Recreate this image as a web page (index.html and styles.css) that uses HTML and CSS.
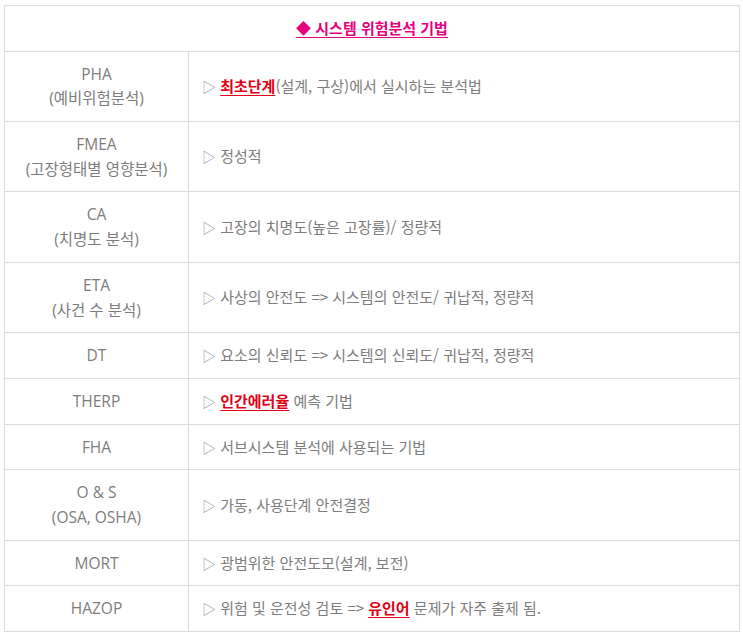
FILE: index.html
```html
<!DOCTYPE html>
<html lang="ko">
<head>
<meta charset="utf-8">
<title>시스템 위험분석 기법</title>
<link rel="stylesheet" href="styles.css">
</head>
<body>
<table class="grid">
  <colgroup><col class="c-name"><col class="c-desc"></colgroup>
  <tr><th colspan="2" class="title"><div class="ln"><span class="title-text">◆ 시스템 위험분석 기법</span></div></th></tr>
  <tr><td class="name"><div class="ln">PHA</div><div class="ln">(예비위험분석)</div></td><td class="desc"><div class="ln"><span class="tri">▷</span> <span class="hl">최초단계</span>(설계, 구상)에서 실시하는 분석법</div></td></tr>
  <tr><td class="name"><div class="ln">FMEA</div><div class="ln">(고장형태별 영향분석)</div></td><td class="desc"><div class="ln"><span class="tri">▷</span> 정성적</div></td></tr>
  <tr><td class="name"><div class="ln">CA</div><div class="ln">(치명도 분석)</div></td><td class="desc"><div class="ln"><span class="tri">▷</span> 고장의 치명도(높은 고장률)/ 정량적</div></td></tr>
  <tr><td class="name"><div class="ln">ETA</div><div class="ln">(사건 수 분석)</div></td><td class="desc"><div class="ln"><span class="tri">▷</span> 사상의 안전도 =&gt; 시스템의 안전도/ 귀납적, 정량적</div></td></tr>
  <tr><td class="name"><div class="ln">DT</div></td><td class="desc"><div class="ln"><span class="tri">▷</span> 요소의 신뢰도 =&gt; 시스템의 신뢰도/ 귀납적, 정량적</div></td></tr>
  <tr><td class="name"><div class="ln">THERP</div></td><td class="desc"><div class="ln"><span class="tri">▷</span> <span class="hl">인간에러율</span> 예측 기법</div></td></tr>
  <tr><td class="name"><div class="ln">FHA</div></td><td class="desc"><div class="ln"><span class="tri">▷</span> 서브시스템 분석에 사용되는 기법</div></td></tr>
  <tr><td class="name"><div class="ln">O &amp; S</div><div class="ln">(OSA, OSHA)</div></td><td class="desc"><div class="ln"><span class="tri">▷</span> 가동, 사용단계 안전결정</div></td></tr>
  <tr><td class="name"><div class="ln">MORT</div></td><td class="desc"><div class="ln"><span class="tri">▷</span> 광범위한 안전도모(설계, 보전)</div></td></tr>
  <tr><td class="name"><div class="ln">HAZOP</div></td><td class="desc"><div class="ln"><span class="tri">▷</span> 위험 및 운전성 검토 =&gt; <span class="hl">유인어</span> 문제가 자주 출제 됨.</div></td></tr>
</table>
</body>
</html>
```
FILE: styles.css
```css
html, body {
  margin: 0;
  padding: 0;
  background: #ffffff;
}
body {
  padding: 5px 0 0 4px;
  font-family: "Noto Sans CJK KR", "Open Sans", sans-serif;
  font-size: 15px;
  color: #7d7d7d;
}
.grid {
  border-collapse: collapse;
  width: 736px;
  table-layout: fixed;
}
.c-name { width: 184px; }
.grid th, .grid td {
  border: 1px solid #dcdcdc;
  padding: 10px 0;
  font-weight: normal;
  vertical-align: middle;
}
.ln {
  height: 24.7px;
  line-height: 24.7px;
  white-space: nowrap;
}
.title {
  text-align: center;
}
.title-text {
  color: #e5007e;
  font-weight: bold;
  text-decoration: underline;
  text-underline-offset: 3px;
}
.name {
  text-align: center;
  font-family: "Open Sans", "Noto Sans CJK KR", sans-serif;
  font-weight: 300;
  font-size: 15.5px;
}
.desc {
  padding-left: 13px !important;
  text-align: left;
}
.tri {
  color: #9a9a9a;
  font-size: 14px;
}
.hl {
  color: #e00015;
  font-weight: bold;
  text-decoration: underline;
  text-underline-offset: 3px;
}
```
